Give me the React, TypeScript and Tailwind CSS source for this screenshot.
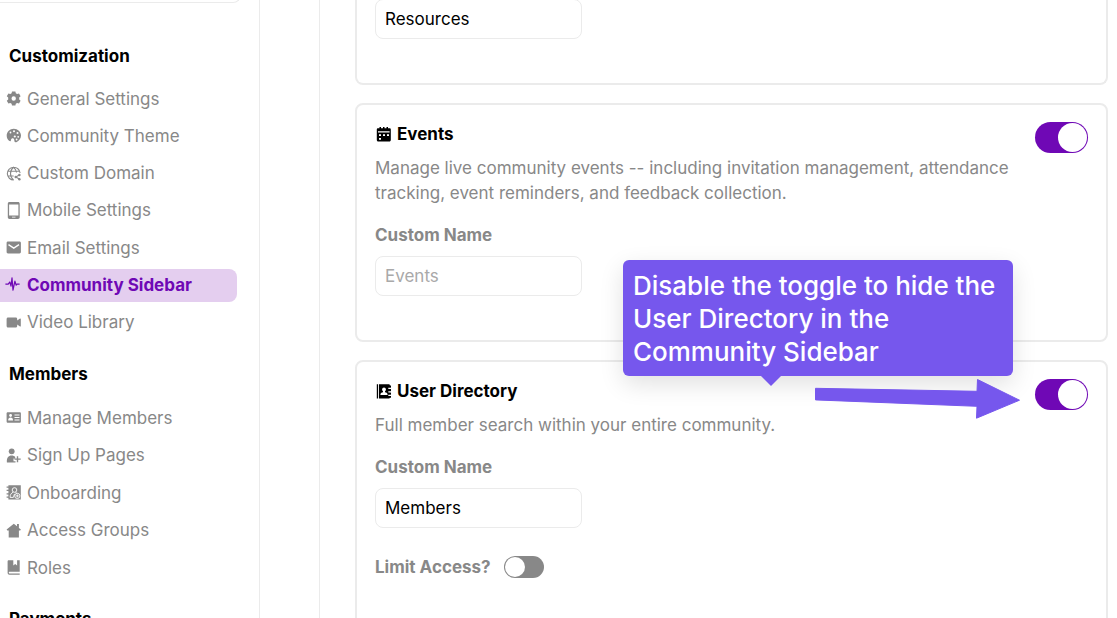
import { ReactNode, useState } from 'react';
import clsx from 'clsx';

type IconProps = { children: ReactNode };

const Icon = ({ children }: IconProps) => (
  <svg viewBox="0 0 15 15" className="h-[15px] w-[15px] shrink-0 overflow-visible" fill="currentColor" aria-hidden="true">
    {children}
  </svg>
);

const icons = {
  gear: (
    <Icon>
      <path
        fillRule="evenodd"
        d="M6 .4h3.400l.4 1.900 1.300.8 1.900-.6 1.600 2.800-1.400 1.200v2l1.400 1.200-1.600 2.800-1.900-.6-1.300.8-.4 1.900H6l-.4-1.900-1.300-.8-1.900.6L.8 9.700l1.400-1.200v-2L.8 5.300l1.600-2.800 1.900.6 1.300-.8zM7.700 5.300a2.200 2.200 0 1 0 0 4.400 2.200 2.200 0 0 0 0-4.400z"
      />
    </Icon>
  ),
  palette: (
    <Icon>
      <path d="M7.800.7C3.900.7.7 3.800.7 7.700c0 2.200 1 4.300 2.700 5.300 1 .5 1.500-.2 1.600-1.100.1-1.200 1-1.900 2-1.700 1.500.2 1.200 2 1.500 3.300.2 1 1.300.9 2.300.5 2.500-1.100 4.200-3.600 4.200-6.400C15 3.800 11.700.7 7.800.7z" />
      <g fill="#fff">
        <circle cx="4.500" cy="4.500" r=".9" />
        <circle cx="8" cy="3.200" r="1" />
        <circle cx="11.500" cy="5" r="1" />
        <circle cx="8.800" cy="8.500" r="1.100" />
        <circle cx="12.200" cy="8.800" r=".9" />
        <circle cx="10.600" cy="11.500" r=".9" />
      </g>
    </Icon>
  ),
  globe: (
    <Icon>
      <g fill="none" stroke="currentColor" strokeWidth="1.100">
        <path d="M7.800 14A6.400 6.400 0 1 1 14.100 7M7.500 14C5.600 12.500 4.500 10.500 4.500 7.600S5.600 2.700 7.500 1.200c1.900 1.500 2.900 3.300 3 5.300M1.700 5.200h11.800M1.700 10h6" />
        <path d="M13.300 9.100 9.800 11l3.500 2" />
      </g>
      <circle cx="13.400" cy="9" r="1.200" />
      <circle cx="9.700" cy="11" r="1.200" />
      <circle cx="13.400" cy="13.200" r="1.200" />
    </Icon>
  ),
  phone: (
    <Icon>
      <path
        fillRule="evenodd"
        d="M3.500-.9h8.500c1 0 1.700.7 1.700 1.700v13.400c0 1-.7 1.700-1.700 1.700H3.500c-1 0-1.700-.7-1.700-1.700V.800c0-1 .7-1.700 1.700-1.700zM3.100 1.400v11.200h9.300V1.400zM6 13.700v.9h3.500v-.9z"
      />
    </Icon>
  ),
  mail: (
    <Icon>
      <path d="M2 1.500h11.500c.8 0 1.400.6 1.400 1.400v9.200c0 .8-.6 1.400-1.400 1.400H2c-.8 0-1.400-.6-1.400-1.400V2.900c0-.8.6-1.400 1.400-1.400z" />
      <path d="M2.500 4.600 7.750 8.100 13 4.600" fill="none" stroke="#fff" strokeWidth="1.300" />
    </Icon>
  ),
  pulse: (
    <Icon>
      <path
        d="M-.6 6.200H2.200L3.800 4 5 8.200 6-.2 7 12.200 8.900 3.200 10.200 7.200 11 6.200h2.600"
        fill="none"
        stroke="currentColor"
        strokeWidth="1.200"
        strokeLinejoin="round"
      />
    </Icon>
  ),
  video: (
    <Icon>
      <path d="M2.100 2.500h7.600c.9 0 1.500.6 1.500 1.500v1.400l2.800-1.900c.4-.2.800 0 .8.500v7c0 .5-.4.700-.8.500l-2.800-1.900V11c0 .9-.6 1.500-1.500 1.500H2.100c-.9 0-1.500-.6-1.500-1.500V4c0-.9.600-1.500 1.500-1.500z" />
    </Icon>
  ),
  card: (
    <Icon>
      <path d="M1.900 2.300h11.700c.8 0 1.300.5 1.300 1.300v7.800c0 .8-.5 1.300-1.300 1.300H1.900c-.8 0-1.300-.5-1.300-1.300V3.600c0-.8.5-1.300 1.300-1.300z" />
      <g fill="#fff">
        <circle cx="4.600" cy="5.500" r="1.400" />
        <path d="M2.200 10.500c0-2 .9-2.900 2.400-2.900S7 8.500 7 10.500zM8.500 4.500h5v1h-5zM8.500 7h5v1h-5zM8.500 9.500h5v1h-5z" />
      </g>
    </Icon>
  ),
  userPlus: (
    <Icon>
      <circle cx="5.700" cy="3.300" r="2.900" />
      <path d="M.9 14.500c-.5-4.500 1.500-7 4.800-7 1.500 0 2.700.5 3.500 1.500v1.500H7.500v2.800h2v1.200zM10.800 8.200h1.400v2.200h2.500v1.400h-2.500v2.500h-1.400v-2.500H8.500v-1.400h2.300z" />
    </Icon>
  ),
  onboarding: (
    <Icon>
      <path d="M2.400.3h12.400v14.300H2.400zM.6 1.500h2v1.200h-2zM.6 4.800h2V6h-2zM.6 8.200h2v1.200h-2zM.6 11.600h2v1.200h-2z" />
      <g fill="none" stroke="#fff" strokeWidth=".9">
        <circle cx="8.500" cy="5" r="2.300" />
        <path d="M7.200 7.200c-2.200 1-3 2.500-3.100 5.200h3.300l1.100-3.500M9.700 7.200l1 1" />
        <circle cx="11.300" cy="10.900" r="2.600" />
        <path d="M11.300 9.400v3M9.800 10.900h3" />
      </g>
    </Icon>
  ),
  house: (
    <Icon>
      <path d="M7.800.7 11 3.300V1h1.900v3.900l2 1.700-.7.900h-1.300v6.900H2.700V7.500H1.300l-.7-.9z" />
    </Icon>
  ),
  book: (
    <Icon>
      <path d="M2.800.3h4.500v5.100l1.900-1.500 1.900 1.500V.3h2.600v11.500H3.400c-.8 0-.8 1.700 0 1.700h10.300v1.200H3.200c-1 0-1.600-.8-1.600-1.900V1.500C1.600.8 2 .3 2.800.3z" />
    </Icon>
  ),
  calendar: (
    <Icon>
      <path d="M3.500 0H5v1.200h2V0h1.500v1.200h2V0H12v1.200h1.500c.8 0 1.300.5 1.300 1.300V13c0 .9-.6 1.500-1.500 1.500h-11C1.400 14.500.8 13.900.8 13V2.500c0-.8.5-1.300 1.300-1.300h1.400z" />
      <path
        d="M2 4.200h11.600v1.300H2zM3 7.200h2v1.700H3zM7 7.200h2v1.700H7zM11 7.200h2v1.700h-2zM3 11h2v1.700H3z"
        fill="#fff"
      />
    </Icon>
  ),
  directory: (
    <Icon>
      <path d="M.8.200h1.300v14.400H.8zM3 .200h9.600c.8 0 1.300.5 1.300 1.200v12c0 .7-.5 1.200-1.300 1.200H3zM13 1.500h2v2.300h-2zM13 5h2v2.300h-2zM13 8.500h2v2.300h-2zM13 12h2v1.800h-2z" />
      <g fill="#fff">
        <circle cx="8" cy="5.500" r="1.900" />
        <path d="M7 6.500h2v1.800c1.600.3 2.600 1 2.600 2.700H4.400c0-1.700 1-2.400 2.600-2.700zM12.300 3.800h2.100V5h-2.100zM12.300 7.300h2.100v1.200h-2.100zM12.300 10.800h2.100V12h-2.100z" />
      </g>
    </Icon>
  ),
};

const customizationLinks = [
  { label: 'General Settings', icon: icons.gear },
  { label: 'Community Theme', icon: icons.palette },
  { label: 'Custom Domain', icon: icons.globe },
  { label: 'Mobile Settings', icon: icons.phone },
  { label: 'Email Settings', icon: icons.mail },
  { label: 'Community Sidebar', icon: icons.pulse, active: true },
  { label: 'Video Library', icon: icons.video },
];

const memberLinks = [
  { label: 'Manage Members', icon: icons.card },
  { label: 'Sign Up Pages', icon: icons.userPlus },
  { label: 'Onboarding', icon: icons.onboarding },
  { label: 'Access Groups', icon: icons.house },
  { label: 'Roles', icon: icons.book },
];

type NavItem = { label: string; icon: ReactNode; active?: boolean };

function NavList({ items, className }: { items: NavItem[]; className: string }) {
  return (
    <ul className={clsx('flex flex-col justify-between', className)}>
      {items.map(({ label, icon, active }) => (
        <li key={label}>
          <a
            href="#"
            aria-current={active ? 'page' : undefined}
            className={clsx(
              'flex h-[33px] items-center gap-1.5 rounded-r-lg pl-1.5 whitespace-nowrap',
              active ? 'bg-[#e4ceef] font-bold text-[#6f08b5]' : 'text-[#888]'
            )}
          >
            {icon}
            {label}
          </a>
        </li>
      ))}
    </ul>
  );
}

function Toggle({ label }: { label: string }) {
  return (
    <input
      type="checkbox"
      role="switch"
      aria-label={label}
      defaultChecked
      className="relative h-[31px] w-[53px] shrink-0 appearance-none rounded-full bg-[#888] before:absolute before:top-px before:left-px before:h-[29px] before:w-[29px] before:rounded-full before:bg-white checked:bg-[#6f08b5] checked:before:left-[23px]"
    />
  );
}

function NameInput({ id, label, value, placeholder }: { id: string; label?: string; value: string; placeholder?: string }) {
  const [name, setName] = useState(value);
  return (
    <input
      id={id}
      aria-label={label}
      value={name}
      placeholder={placeholder}
      onChange={(e) => setName(e.target.value)}
      className="block h-10 w-[207px] rounded-lg border border-[#ebebeb] px-[9px] text-black outline-none placeholder:text-[#a9a9a9]"
    />
  );
}

type FeatureCardProps = {
  id: string;
  title: string;
  icon: ReactNode;
  description: string;
  value: string;
  placeholder?: string;
  children?: ReactNode;
};

function FeatureCard({ id, title, icon, description, value, placeholder, children }: FeatureCardProps) {
  return (
    <section className="rounded-lg border-2 border-[#ebebeb] px-[18px] pt-[17px] pb-11">
      <div className="flex items-start justify-between">
        <div>
          <h3 className="flex h-6 items-center gap-1.5 pl-px font-bold text-black">
            {icon}
            {title}
          </h3>
          <p className="mt-[10px] max-w-[640px] leading-[25px]">{description}</p>
        </div>
        <Toggle label={title} />
      </div>
      <label htmlFor={id} className="mt-[17px] mb-[9px] block font-bold">Custom Name</label>
      <NameInput id={id} value={value} placeholder={placeholder} />
      {children}
    </section>
  );
}

export default function App() {
  return (
    <div className="relative flex h-screen overflow-hidden bg-white font-['Inter',sans-serif] text-[17px] leading-6 text-[#888]">
      {/* Settings sidebar */}
      <aside className="w-[260px] shrink-0 border-r border-[#ebebeb] pr-[22px]">
        <div className="-mt-[37px] -mr-1 h-10 rounded-br-lg border-r border-b border-[#ebebeb]" />
        <nav>
          <h2 className="mt-[41px] pl-[9px] font-bold text-black">Customization</h2>
          <NavList items={customizationLinks} className="mt-[14px] h-[257px]" />
          <h2 className="mt-[23px] pl-[9px] font-bold text-black">Members</h2>
          <NavList items={memberLinks} className="mt-[15px] h-[183px]" />
          <h2 className="mt-[23px] pl-[9px] font-bold text-black">Payments</h2>
        </nav>
      </aside>

      <div className="ml-[59px] flex min-w-0 flex-1 flex-col border-l border-[#ebebeb]">
        <main className="flex flex-col gap-[18px] pr-[9px] pl-[35px]">
          <section className="-mt-px rounded-b-lg border-2 border-t-0 border-[#ebebeb] px-[18px] pb-11">
            <NameInput id="resources-name" label="Custom Name" value="Resources" />
          </section>

          <FeatureCard
            id="events-name"
            title="Events"
            icon={icons.calendar}
            description="Manage live community events -- including invitation management, attendance tracking, event reminders, and feedback collection."
            value=""
            placeholder="Events"
          />

          <FeatureCard
            id="directory-name"
            title="User Directory"
            icon={icons.directory}
            description="Full member search within your entire community."
            value="Members"
          >
            <div className="mt-[27px] flex items-center gap-[13px]">
              <label htmlFor="limit-access" className="font-bold">Limit Access?</label>
              <input
                id="limit-access"
                type="checkbox"
                role="switch"
                className="relative h-[22px] w-10 appearance-none rounded-full bg-[#888] before:absolute before:top-px before:left-px before:h-5 before:w-5 before:rounded-full before:bg-white checked:bg-[#6f08b5] checked:before:left-[19px]"
              />
            </div>
          </FeatureCard>
        </main>
      </div>

      {/* Walkthrough callout */}
      <div
        role="tooltip"
        className="absolute top-[260px] right-[104px] w-[390px] rounded-md bg-[#7657ed] px-[10px] pt-[9px] pb-2 text-[26px] leading-[33px] font-medium text-white shadow-[0_8px_24px_rgba(0,0,0,0.12)]"
      >
        Disable the toggle to hide the User Directory in the Community Sidebar
        <svg viewBox="0 0 20 10" className="absolute top-full left-[138px] h-[10px] w-5" fill="#7657ed" aria-hidden="true">
          <path d="M0 0h20L10 10z" />
        </svg>
      </div>
      <svg viewBox="0 0 206 41" className="absolute top-[378px] right-[97px] h-[41px] w-[206px]" fill="#7657ed" stroke="#7657ed" strokeLinejoin="round" aria-hidden="true">
        <path d="M1.500 10.300 163 13.300 163.500 1.500 205.500 22.200 162.500 40.200 163 28.300 1.500 21.900z" />
      </svg>
    </div>
  );
}
